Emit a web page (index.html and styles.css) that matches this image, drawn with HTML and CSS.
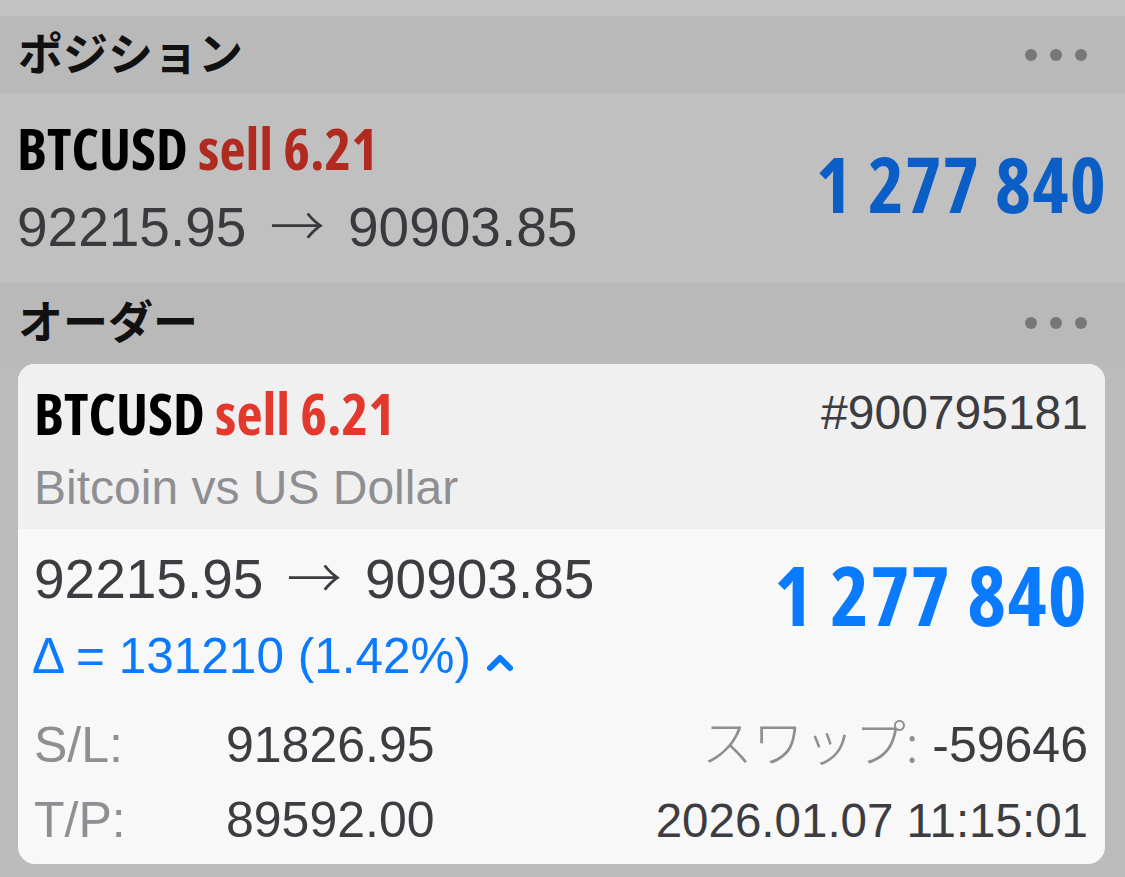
FILE: index.html
```html
<!DOCTYPE html>
<html lang="ja">
<head>
<meta charset="utf-8">
<title>ポジション</title>
<link rel="stylesheet" href="styles.css">
</head>
<body>
<div class="screen">
  <div class="top-strip"></div>

  <section class="group-header">
    <h2 class="group-title">ポジション</h2>
    <div class="more"><span></span><span></span><span></span></div>
  </section>

  <div class="position-row">
    <div class="pos-main">
      <div class="deal-title"><span class="sym">BTCUSD</span> <span class="side">sell 6.21</span></div>
      <div class="prices">92215.95 <span class="arrow">→</span> 90903.85</div>
    </div>
    <div class="profit">1 277 840</div>
  </div>

  <section class="group-header orders-header">
    <h2 class="group-title">オーダー</h2>
    <div class="more"><span></span><span></span><span></span></div>
  </section>

  <div class="orders">
    <div class="card">
      <div class="card-head">
        <div class="head-row">
          <div class="deal-title"><span class="sym">BTCUSD</span> <span class="side">sell 6.21</span></div>
          <div class="ticket">#900795181</div>
        </div>
        <div class="desc">Bitcoin vs US Dollar</div>
      </div>
      <div class="card-body">
        <div class="body-top">
          <div class="body-left">
            <div class="prices">92215.95 <span class="arrow">→</span> 90903.85</div>
            <div class="delta">Δ = 131210 (1.42%)<svg class="chev" width="26" height="20" viewBox="0 0 26 20"><polyline points="3,15 13,5 23,15" fill="none" stroke="currentColor" stroke-width="6" stroke-linecap="round" stroke-linejoin="round"/></svg></div>
          </div>
          <div class="profit">1 277 840</div>
        </div>
        <div class="details">
          <div class="detail-row">
            <span class="lbl">S/L:</span>
            <span class="val">91826.95</span>
            <span class="right"><span class="lbl-jp">スワップ:</span> <span>-59646</span></span>
          </div>
          <div class="detail-row">
            <span class="lbl">T/P:</span>
            <span class="val">89592.00</span>
            <span class="right date">2026.01.07 11:15:01</span>
          </div>
        </div>
      </div>
    </div>
  </div>
</div>
</body>
</html>
```
FILE: styles.css
```css
html, body {
  margin: 0;
  padding: 0;
}
body {
  background: #bbbbbb;
  font-family: "Liberation Sans", "Noto Sans CJK JP", sans-serif;
}
.screen {
  width: 1125px;
  height: 877px;
  overflow: hidden;
  background: #bbbbbb;
}
.top-strip {
  height: 16px;
  background: #c2c2c2;
}

/* section headers */
.group-header {
  box-sizing: border-box;
  height: 77px;
  display: flex;
  align-items: center;
  justify-content: space-between;
  padding: 0 38px 0 18px;
  background: #b9b9b9;
}
.orders-header {
  height: 79px;
}
.group-title {
  margin: 0;
  padding-bottom: 6px;
  font-family: "Noto Sans CJK JP", sans-serif;
  font-weight: 700;
  font-size: 45px;
  line-height: 65px;
  color: #111111;
}
.more {
  display: flex;
  gap: 13px;
}
.more span {
  width: 12px;
  height: 12px;
  border-radius: 50%;
  background: #777777;
}

/* shared text styles */
.deal-title {
  font-family: "Open Sans", sans-serif;
  font-stretch: 75%;
  font-weight: 700;
  font-size: 57px;
  line-height: 60px;
  white-space: nowrap;
  color: #000000;
}
.prices {
  font-family: "Liberation Sans", sans-serif;
  font-size: 55px;
  line-height: 62px;
  white-space: nowrap;
  color: #3a3a3e;
}
.arrow {
  font-family: "Noto Sans CJK JP", sans-serif;
  font-weight: 300;
  line-height: 0;
  margin: 0 8px;
}
.profit {
  font-family: "Open Sans", sans-serif;
  font-stretch: 75%;
  font-weight: 700;
  white-space: nowrap;
}

/* position row */
.position-row {
  box-sizing: border-box;
  height: 190px;
  display: flex;
  justify-content: space-between;
  align-items: flex-start;
  padding: 25px 18px 0 17px;
  background: #c0c0c0;
}
.position-row .side {
  color: #b02a20;
}
.position-row .prices {
  margin-top: 18px;
}
.position-row .profit {
  align-self: center;
  margin-top: -35px;
  font-size: 77px;
  line-height: 77px;
  letter-spacing: 1.2px;
  color: #0a5ec5;
}

/* orders */
.orders {
  padding: 2px 20px 13px 18px;
}
.card {
  border-radius: 17px;
  overflow: hidden;
  background: #f8f8f8;
}
.card-head {
  box-sizing: border-box;
  height: 165px;
  padding: 19px 17px 0 16px;
  background: #f0f0f0;
}
.head-row {
  display: flex;
  justify-content: space-between;
  align-items: flex-start;
}
.card .deal-title {
  font-size: 57px;
}
.card .side {
  color: #e3392c;
}
.ticket {
  font-size: 48px;
  line-height: 60px;
  color: #3c3c41;
}
.desc {
  margin-top: 15px;
  font-size: 48px;
  line-height: 60px;
  color: #8e8e93;
}
.card-body {
  box-sizing: border-box;
  height: 335px;
  padding: 20px 17px 0 16px;
}
.body-top {
  display: flex;
  justify-content: space-between;
  align-items: flex-start;
}
.card .prices {
  font-size: 55px;
  line-height: 60px;
  color: #3c3c41;
}
.delta {
  margin-top: 17px;
  margin-left: -2px;
  font-size: 49.5px;
  line-height: 60px;
  color: #0a7aff;
  white-space: nowrap;
}
.chev {
  margin-left: 16px;
  vertical-align: baseline;
  color: #0a7aff;
}
.card .profit {
  margin-top: 3px;
  font-size: 83px;
  line-height: 83px;
  letter-spacing: 1.3px;
  color: #0a7aff;
}
.details {
  margin-top: 22px;
}
.detail-row {
  display: flex;
  align-items: baseline;
  font-size: 50px;
  line-height: 75px;
  color: #3c3c41;
  white-space: nowrap;
}
.lbl {
  width: 192px;
  color: #8e8e93;
}
.val {
  flex: 1;
}
.right {
  text-align: right;
}
.lbl-jp {
  font-family: "Noto Sans CJK JP", sans-serif;
  font-weight: 300;
  font-size: 51px;
  line-height: 0;
  color: #8e8e93;
}
.date {
  font-size: 47.5px;
}
```
